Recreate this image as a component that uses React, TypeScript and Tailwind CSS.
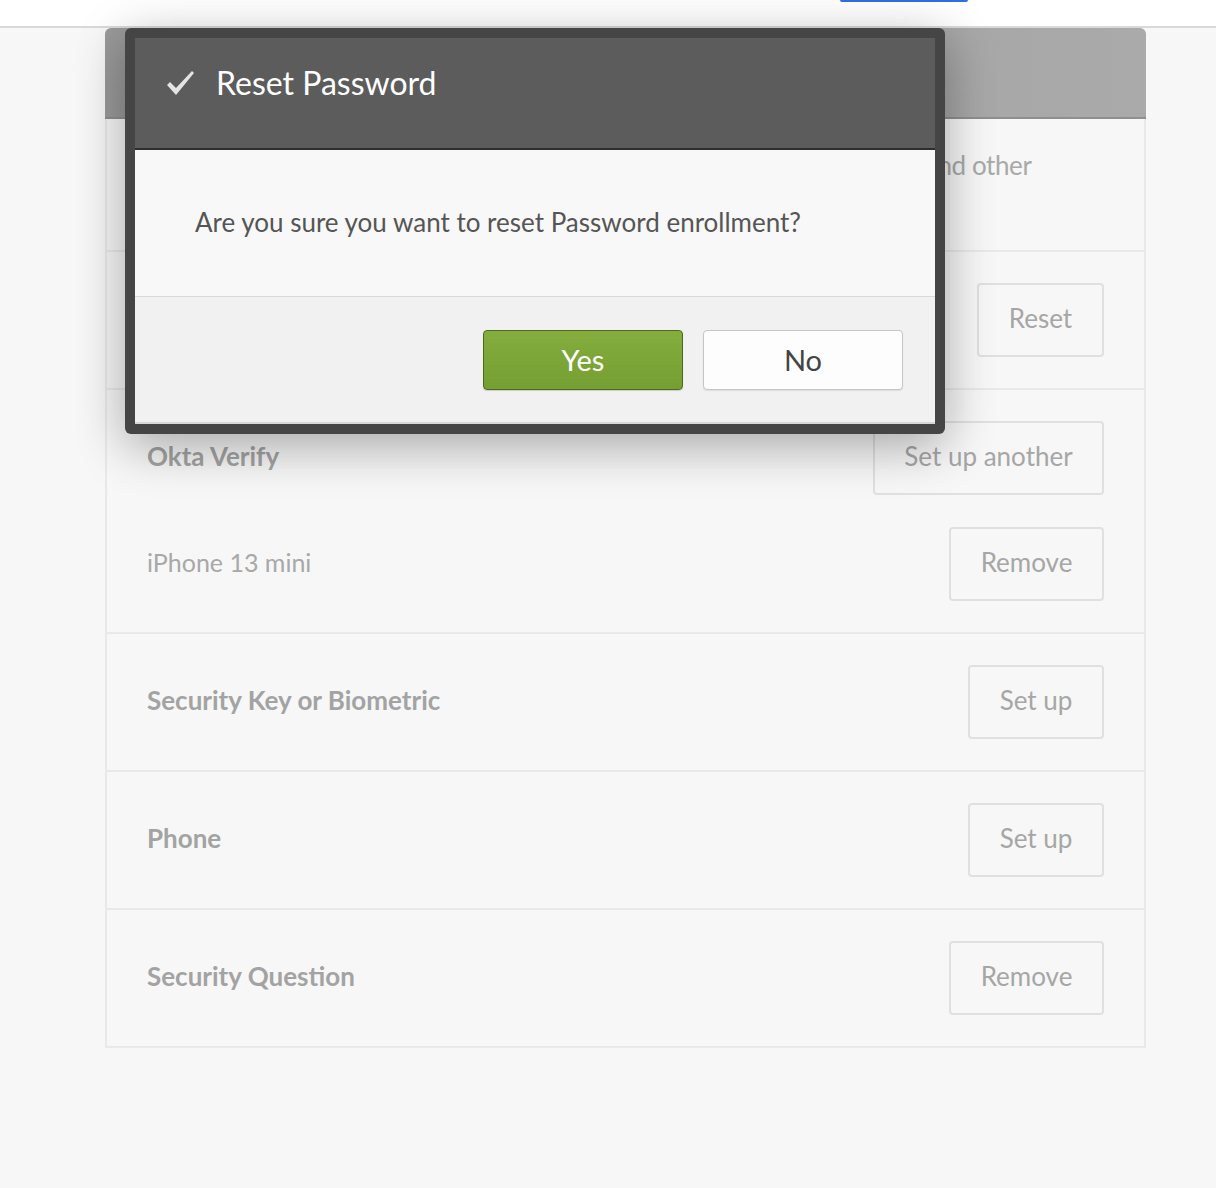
import React from "react";

function OutlineButton({ label, width }: { label: string; width: string }) {
  return (
    <div
      className={`${width} flex h-[74px] shrink-0 items-center justify-center rounded-[4px] border-2 border-[#e0e0e0] bg-[#f7f7f7] pb-[5px] text-[26px] leading-none text-[#a6a6a6]`}
    >
      {label}
    </div>
  );
}

export default function App() {
  return (
    <div className="relative min-h-[1188px] w-[1216px] overflow-hidden bg-[#f7f7f7] font-[Lato,sans-serif]">
      {/* top bar */}
      <div className="h-[28px] border-b-2 border-[#d9d9d9] bg-white">
        <div className="ml-[840px] h-[2px] w-[128px] rounded-b-[2px] bg-[#2f6fde]" />
      </div>

      {/* panel */}
      <div className="ml-[105px] w-[1041px]">
        <div className="h-[91px] rounded-t-[6px] border-b-2 border-[#8f8f8f] bg-gradient-to-r from-[#9a9a9a] to-[#aaaaaa]" />
        <div className="border-x-2 border-[#e9e9e9]">
          {/* description row */}
          <div className="h-[133px] border-b-2 border-[#e9e9e9] pl-[40px] pr-[40px] pt-[29px]">
            <p className="w-[920px] text-[26px] leading-[34px] tracking-[-0.4px] text-[#a9a9a9]">
              Security methods help you verify your identity when signing in to Okta and other applications.
            </p>
          </div>
          {/* password row */}
          <div className="flex h-[138px] items-center justify-between border-b-2 border-[#e9e9e9] pl-[40px] pr-[40px]">
            <span className="pb-[4px] text-[26px] font-bold text-[#a3a3a3]">Password</span>
            <OutlineButton label="Reset" width="w-[127px]" />
          </div>
          {/* okta verify row */}
          <div className="flex flex-col gap-[32px] border-b-2 border-[#e9e9e9] pb-[31px] pl-[40px] pr-[40px] pt-[31px]">
            <div className="flex items-center justify-between">
              <span className="pb-[4px] text-[26px] font-bold text-[#a3a3a3]">Okta Verify</span>
              <OutlineButton label="Set up another" width="w-[231px]" />
            </div>
            <div className="flex items-center justify-between">
              <span className="pb-[2px] text-[25px] text-[#a8a8a8]">iPhone 13 mini</span>
              <OutlineButton label="Remove" width="w-[155px]" />
            </div>
          </div>
          <div className="flex h-[138px] items-center justify-between border-b-2 border-[#e9e9e9] pl-[40px] pr-[40px]">
            <span className="pb-[4px] text-[26px] font-bold text-[#a3a3a3]">Security Key or Biometric</span>
            <OutlineButton label="Set up" width="w-[136px]" />
          </div>
          <div className="flex h-[138px] items-center justify-between border-b-2 border-[#e9e9e9] pl-[40px] pr-[40px]">
            <span className="pb-[4px] text-[26px] font-bold text-[#a3a3a3]">Phone</span>
            <OutlineButton label="Set up" width="w-[136px]" />
          </div>
          <div className="flex h-[138px] items-center justify-between border-b-2 border-[#e9e9e9] pl-[40px] pr-[40px]">
            <span className="pb-[4px] text-[26px] font-bold text-[#a3a3a3]">Security Question</span>
            <OutlineButton label="Remove" width="w-[155px]" />
          </div>
        </div>
      </div>

      {/* dialog */}
      <div className="absolute left-[125px] top-[28px] flex h-[406px] w-[820px] flex-col rounded-[6px] bg-[#454545] p-[10px] shadow-[0_12px_50px_rgba(0,0,0,0.33)]">
        <div className="flex h-[112px] shrink-0 items-center border-b-2 border-[#2e2e2e] bg-[#5c5c5c] pb-[20px] pl-[31px]">
          <svg width="28" height="26" viewBox="0 0 28 26" className="mr-[22px]">
            <polygon points="1,15 4,12 10,18 26,1 28,3 10,25" fill="#e4e4e4" />
          </svg>
          <span className="text-[32px] leading-none text-white">Reset Password</span>
        </div>
        <div className="flex h-[147px] shrink-0 items-center border-b border-[#d9d9d9] bg-[#f8f8f8] pb-[2px] pl-[60px]">
          <span className="text-[26px] leading-none text-[#555555]">
            Are you sure you want to reset Password enrollment?
          </span>
        </div>
        <div className="flex flex-1 items-center justify-end gap-[20px] border-b-2 border-[#d6d6d6] bg-[#f1f1f1] pr-[32px]">
          <div className="flex h-[60px] w-[200px] items-center justify-center rounded-[4px] border border-[#4b6a1d] bg-gradient-to-b from-[#84ad3e] to-[#759f32] text-[29px] leading-none text-white shadow-[0_1px_1px_rgba(0,0,0,0.15)]">
            Yes
          </div>
          <div className="flex h-[60px] w-[200px] items-center justify-center rounded-[4px] border border-[#c6c6c6] bg-[#fdfdfd] text-[29px] leading-none text-[#444444] shadow-[0_1px_1px_rgba(0,0,0,0.08)]">
            No
          </div>
        </div>
      </div>
    </div>
  );
}
